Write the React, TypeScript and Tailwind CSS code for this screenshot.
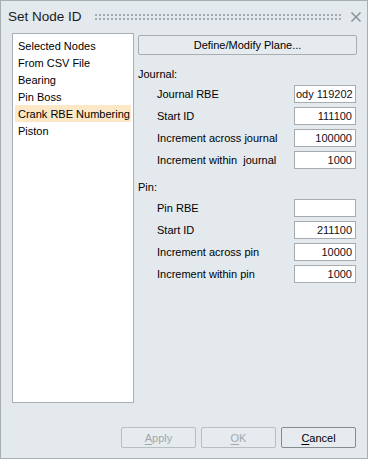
import React from 'react';

const items = ['Selected Nodes', 'From CSV File', 'Bearing', 'Pin Boss', 'Crank RBE Numbering', 'Piston'];

function Field({ label, value, left }: { label: string; value: string; left?: boolean }) {
    return (
        <div className="flex h-[18px] items-center">
            <span className="ml-[19px] flex-1 whitespace-pre">{label}</span>
            <div
                className={`mr-[1px] flex h-[18px] w-[62px] items-center overflow-hidden whitespace-nowrap border border-[#a6acb0] bg-white text-[#101020] ${left ? 'justify-start pl-[1px]' : 'justify-end pr-[3px]'}`}
            >
                {value}
            </div>
        </div>
    );
}

function DlgButton({ children, disabled }: { children: React.ReactNode; disabled?: boolean }) {
    return (
        <button
            className={`flex h-[21px] w-[75px] items-center justify-center rounded-[2px] border bg-[#e5ebef] ${disabled ? 'border-[#b9bec1] text-[#a2a8ac]' : 'border-[#868b8e] text-black'}`}
        >
            {children}
        </button>
    );
}

export default function App() {
    return (
        <div className="flex h-[459px] w-[368px] flex-col border border-[#a8afb3] bg-[#e3e9ed] font-['Liberation_Sans',Arial,sans-serif] text-[11px] leading-[14px] text-black">
            {/* Title bar */}
            <div className="flex h-[32px] shrink-0 items-center pl-[7px] pr-[5px]">
                <span className="text-[13.5px] leading-[16px] text-[#1b1b1b]">Set Node ID</span>
                <svg className="ml-[13px] h-[7px] flex-1">
                    <defs>
                        <pattern id="grip" width="4" height="4" patternUnits="userSpaceOnUse">
                            <rect x="0" y="0" width="2" height="2" fill="#a3abb0" />
                        </pattern>
                    </defs>
                    <rect x="0" y="0" width="100%" height="6" fill="url(#grip)" />
                </svg>
                <svg width="12" height="12" viewBox="0 0 12 12" className="ml-[7px]">
                    <path d="M1.5 1.5 L10.5 10.5 M10.5 1.5 L1.5 10.5" stroke="#8d959a" strokeWidth="1.6" />
                </svg>
            </div>

            {/* Body */}
            <div className="flex h-[370px] shrink-0 pl-[11px] pr-[10px]">
                <div className="w-[122px] border border-[#a8afb3] bg-white px-[2px] pt-[3px]">
                    {items.map(it => (
                        <div
                            key={it}
                            className={`flex h-[17px] items-center whitespace-nowrap pl-[3px] ${it === 'Crank RBE Numbering' ? 'bg-[#fce8c6]' : ''}`}
                        >
                            {it}
                        </div>
                    ))}
                </div>

                <div className="ml-[4px] flex flex-1 flex-col pt-[2px]">
                    <button className="flex h-[20px] items-center justify-center rounded-[2px] border border-[#a8adb1] bg-[#e5ebef]">
                        Define/Modify Plane...
                    </button>

                    <div className="mt-[12px] h-[14px]">Journal:</div>
                    <div className="mt-[4px] flex flex-col gap-[4px]">
                        <Field label="Journal RBE" value="ody 119202" left />
                        <Field label="Start ID" value="111100" />
                        <Field label="Increment across journal" value="100000" />
                        <Field label="Increment within  journal" value="1000" />
                    </div>

                    <div className="mt-[11px] h-[14px]">Pin:</div>
                    <div className="mt-[5px] flex flex-col gap-[4px]">
                        <Field label="Pin RBE" value="" />
                        <Field label="Start ID" value="211100" />
                        <Field label="Increment across pin" value="10000" />
                        <Field label="Increment within pin" value="1000" />
                    </div>
                </div>
            </div>

            {/* Footer */}
            <div className="mt-[24px] flex justify-end gap-[5px] pr-[11px]">
                <DlgButton disabled>
                    <u className="underline-offset-2">A</u>pply
                </DlgButton>
                <DlgButton disabled>
                    <u className="underline-offset-2">O</u>K
                </DlgButton>
                <DlgButton>
                    <u className="underline-offset-2">C</u>ancel
                </DlgButton>
            </div>
        </div>
    );
}
